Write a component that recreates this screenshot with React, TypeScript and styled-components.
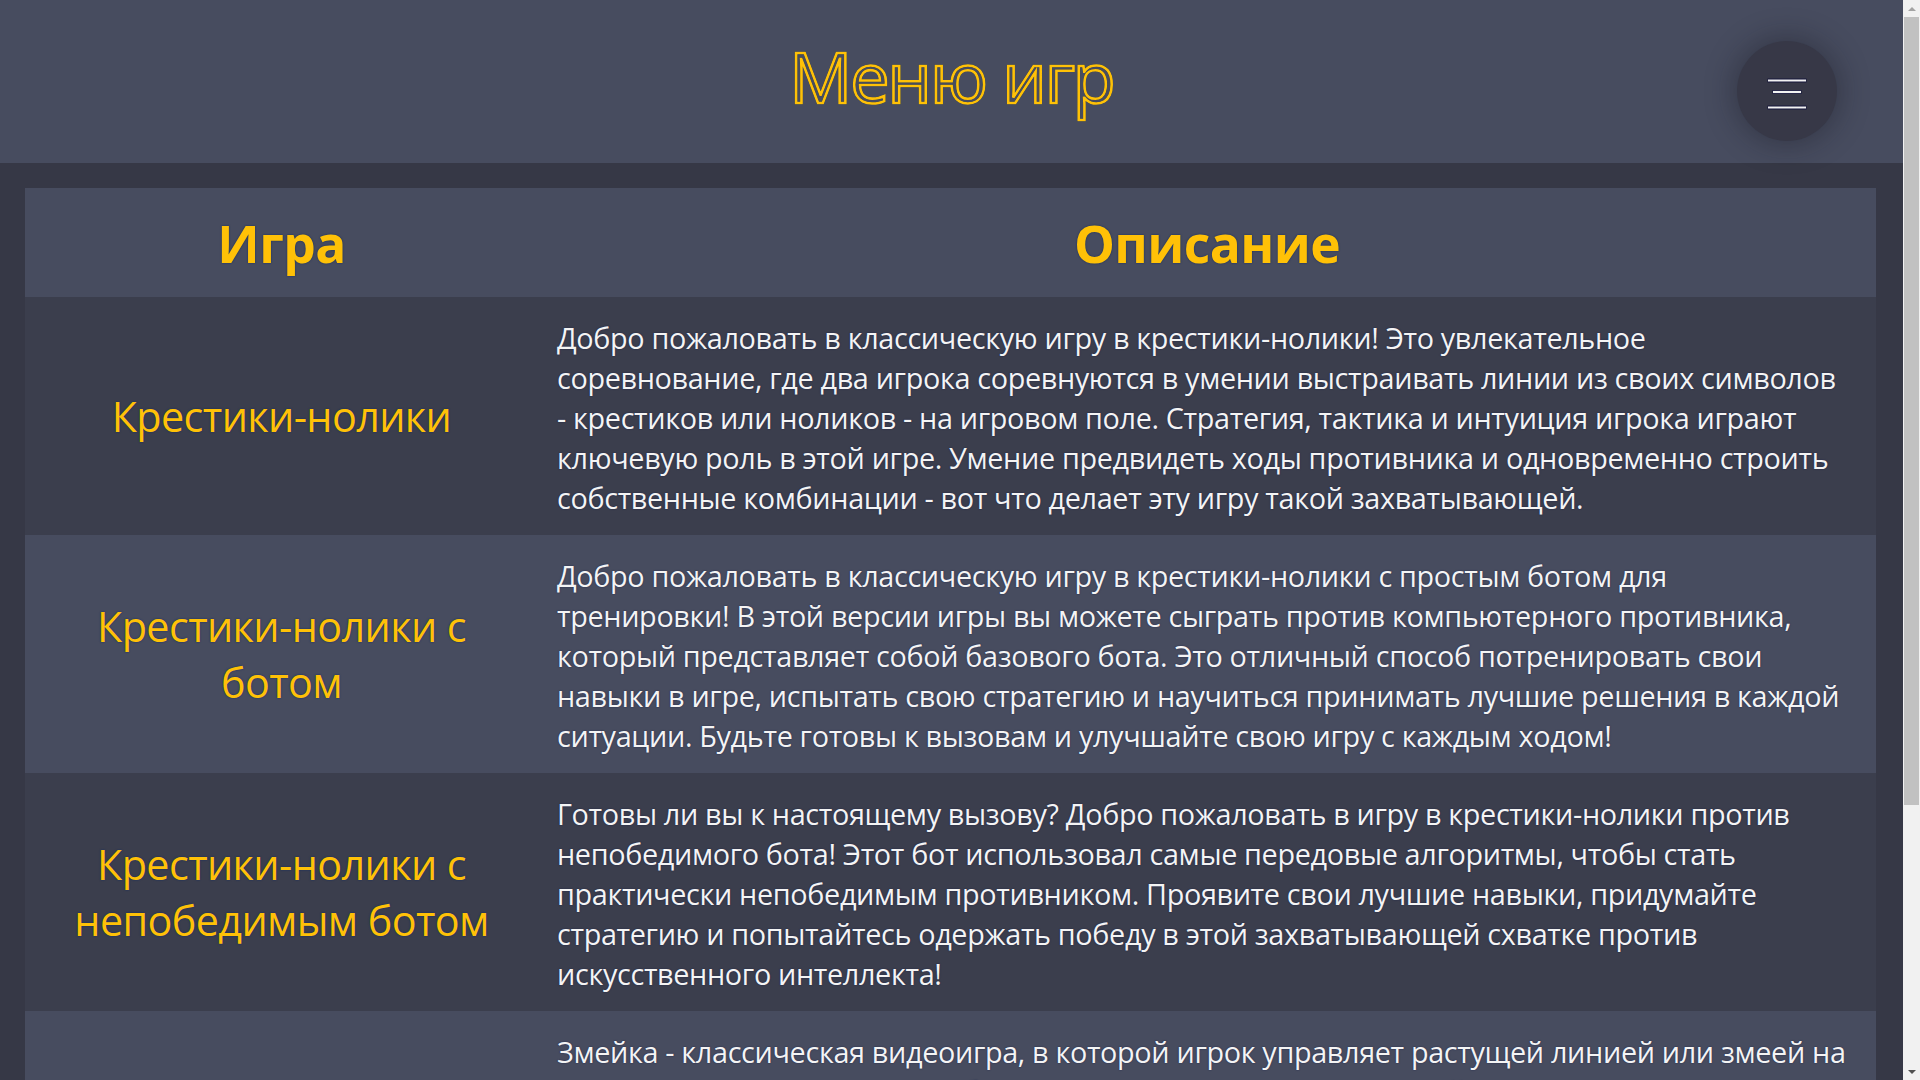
import React from "react";
import styled, { createGlobalStyle } from "styled-components";

const GlobalStyle = createGlobalStyle`
  html, body {
    margin: 0;
    padding: 0;
    background: #363846;
    font-family: "Open Sans", "Noto Sans", sans-serif;
  }
  * { box-sizing: border-box; }
`;

const Page = styled.div`
  min-height: 100vh;
  margin-right: 17px;
  background: #363846;
`;

const Header = styled.header`
  position: relative;
  height: 163px;
  background: #474c5f;
  display: flex;
  justify-content: center;
  align-items: flex-start;
`;

const Title = styled.h1`
  margin: 0;
  padding-top: 28px;
  font-size: 70px;
  font-weight: 400;
  line-height: 96px;
  color: transparent;
  -webkit-text-stroke: 2.6px #ffc107;
  filter: drop-shadow(0 0 0.6px #0d2a66) drop-shadow(0 0 0.4px #0d2a66);
  letter-spacing: -2px;
`;

const MenuButton = styled.button`
  position: absolute;
  top: 41px;
  right: 66px;
  width: 100px;
  height: 100px;
  border: none;
  border-radius: 50%;
  background: #373847;
  box-shadow: 0 0 28px 4px rgba(20, 20, 30, 0.35);
  padding: 0;
  cursor: pointer;
  display: flex;
  align-items: center;
  justify-content: center;
`;

const Main = styled.main`
  padding: 25px 27px 0 25px;
`;

const Table = styled.div`
  display: flex;
  flex-direction: column;
`;

const Row = styled.div<{ $tone: "light" | "dark" }>`
  display: grid;
  grid-template-columns: 513px 1fr;
  background: ${(p) => (p.$tone === "light" ? "#474c5f" : "#3b3e4d")};
`;

const HeadCell = styled.div`
  height: 109px;
  display: flex;
  align-items: center;
  justify-content: center;
  font-size: 51.5px;
  font-weight: 700;
  color: #ffc107;
  text-shadow: 0 0 2px #0d2a66;
  letter-spacing: -0.6px;
`;

const NameCell = styled.div`
  display: flex;
  align-items: center;
  justify-content: center;
  text-align: center;
  padding: 20px 36px;
  font-size: 41.3px;
  line-height: 56px;
  color: #ffc107;
  text-shadow: 0 0 2px #0d2a66;
  letter-spacing: -0.6px;
`;

const DescCell = styled.div`
  padding: 21px 12px 17px 19px;
  font-size: 28.8px;
  line-height: 40px;
  color: #f4f4f4;
  text-shadow: 0 0 1.5px rgba(10, 20, 70, 0.8);
  letter-spacing: -0.35px;
`;

const DescLine = styled.span`
  display: block;
`;

const ScrollTrack = styled.div`
  position: fixed;
  top: 0;
  right: 0;
  width: 17px;
  height: 100vh;
  background: #f1f1f1;
  display: flex;
  flex-direction: column;
  align-items: center;
`;

const ScrollArrow = styled.div<{ $down?: boolean }>`
  width: 17px;
  height: 17px;
  display: flex;
  align-items: center;
  justify-content: center;
  margin-top: ${(p) => (p.$down ? "auto" : "0")};
  &::before {
    content: "";
    border-left: 4px solid transparent;
    border-right: 4px solid transparent;
    ${(p) =>
      p.$down ? "border-top: 4px solid #505050;" : "border-bottom: 4px solid #a3a3a3;"}
  }
`;

const ScrollThumb = styled.div`
  width: 15px;
  height: 788px;
  background: #c1c1c1;
`;

const HamburgerIcon = () => (
  <svg width="100" height="100" viewBox="0 0 100 100" aria-hidden>
    <g stroke="#14143a" strokeWidth="4" strokeLinecap="butt">
      <line x1="30.5" y1="39.5" x2="69.5" y2="39.5" />
      <line x1="35.5" y1="51" x2="64.5" y2="51" />
      <line x1="30.5" y1="66.5" x2="69.5" y2="66.5" />
    </g>
    <g stroke="#f2f2f2" strokeWidth="2.2" strokeLinecap="butt">
      <line x1="31" y1="39.5" x2="69" y2="39.5" />
      <line x1="36" y1="51" x2="64" y2="51" />
      <line x1="31" y1="66.5" x2="69" y2="66.5" />
    </g>
  </svg>
);

const games: { name: string; lines: string[] }[] = [
  {
    name: "Крестики-нолики",
    lines: [
      "Добро пожаловать в классическую игру в крестики-нолики! Это увлекательное",
      "соревнование, где два игрока соревнуются в умении выстраивать линии из своих символов",
      "- крестиков или ноликов - на игровом поле. Стратегия, тактика и интуиция игрока играют",
      "ключевую роль в этой игре. Умение предвидеть ходы противника и одновременно строить",
      "собственные комбинации - вот что делает эту игру такой захватывающей.",
    ],
  },
  {
    name: "Крестики-нолики с ботом",
    lines: [
      "Добро пожаловать в классическую игру в крестики-нолики с простым ботом для",
      "тренировки! В этой версии игры вы можете сыграть против компьютерного противника,",
      "который представляет собой базового бота. Это отличный способ потренировать свои",
      "навыки в игре, испытать свою стратегию и научиться принимать лучшие решения в каждой",
      "ситуации. Будьте готовы к вызовам и улучшайте свою игру с каждым ходом!",
    ],
  },
  {
    name: "Крестики-нолики с непобедимым ботом",
    lines: [
      "Готовы ли вы к настоящему вызову? Добро пожаловать в игру в крестики-нолики против",
      "непобедимого бота! Этот бот использовал самые передовые алгоритмы, чтобы стать",
      "практически непобедимым противником. Проявите свои лучшие навыки, придумайте",
      "стратегию и попытайтесь одержать победу в этой захватывающей схватке против",
      "искусственного интеллекта!",
    ],
  },
  {
    name: "Змейка",
    lines: [
      "Змейка - классическая видеоигра, в которой игрок управляет растущей линией или змеей на",
      "игровом поле. Цель игры - собирать еду, появляющуюся в случайных местах поля, и",
      "становиться всё длиннее, не врезаясь при этом в стены и в собственный хвост. С каждым",
      "съеденным кусочком змейка растёт, а управлять ею становится всё сложнее. Проверьте",
      "свою реакцию и внимательность и попробуйте установить новый рекорд!",
      "Сможете ли вы стать самой длинной змейкой на поле?",
    ],
  },
];

export default function App() {
  return (
    <Page>
      <GlobalStyle />
      <Header>
        <Title>Меню игр</Title>
        <MenuButton aria-label="Меню">
          <HamburgerIcon />
        </MenuButton>
      </Header>
      <Main>
        <Table>
          <Row $tone="light">
            <HeadCell>Игра</HeadCell>
            <HeadCell>Описание</HeadCell>
          </Row>
          {games.map((g, i) => (
            <Row key={g.name} $tone={i % 2 === 0 ? "dark" : "light"}>
              <NameCell>{g.name}</NameCell>
              <DescCell>
                {g.lines.map((line) => (
                  <DescLine key={line}>{line}</DescLine>
                ))}
              </DescCell>
            </Row>
          ))}
        </Table>
      </Main>
      <ScrollTrack aria-hidden>
        <ScrollArrow />
        <ScrollThumb />
        <ScrollArrow $down />
      </ScrollTrack>
    </Page>
  );
}
